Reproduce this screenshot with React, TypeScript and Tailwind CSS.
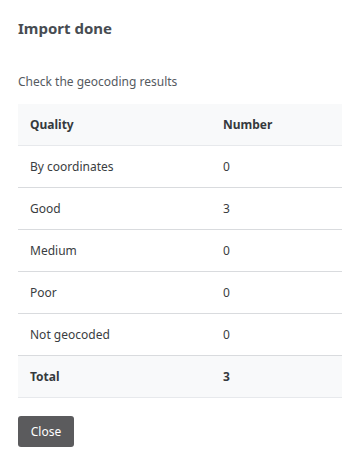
const rows = [
  { quality: 'By coordinates', number: 0 },
  { quality: 'Good', number: 3 },
  { quality: 'Medium', number: 0 },
  { quality: 'Poor', number: 0 },
  { quality: 'Not geocoded', number: 0 },
];

const App = () => {
  const total = rows.reduce((sum, r) => sum + r.number, 0);

  return (
    <div className="w-[360px] h-[465px] bg-white p-[18px] flex flex-col text-[#3a3d41] font-['Noto_Sans',sans-serif]">
      <h2 className="text-[15px] leading-[20px] font-bold text-[#474c52]">Import done</h2>

      <p className="mt-[34px] text-[12px] leading-[20px] text-[#555a5f]">Check the geocoding results</p>

      <div className="mt-[12px] text-[12px] leading-[20px]">
        {/* Header */}
        <div className="grid grid-cols-[193px_1fr] h-[42px] items-center bg-[#f8f9fa] border-b border-[#e7e9ec] font-bold text-[#35393d]">
          <div className="px-3">Quality</div>
          <div className="px-3">Number</div>
        </div>

        {rows.map((row) => (
          <div
            key={row.quality}
            className="grid grid-cols-[193px_1fr] h-[42px] items-center border-b border-[#d9dbde]"
          >
            <div className="px-3">{row.quality}</div>
            <div className="px-3">{row.number}</div>
          </div>
        ))}

        {/* Total */}
        <div className="grid grid-cols-[193px_1fr] h-[42px] items-center bg-[#f8f9fa] border-b border-[#e7e9ec] font-bold text-[#35393d]">
          <div className="px-3">Total</div>
          <div className="px-3">{total}</div>
        </div>
      </div>

      <div className="mt-[18px]">
        <button className="w-[56px] h-[31px] rounded-[3px] bg-[#5b5b5d] text-white text-[12px] leading-[20px]">
          Close
        </button>
      </div>
    </div>
  );
};

export default App;
